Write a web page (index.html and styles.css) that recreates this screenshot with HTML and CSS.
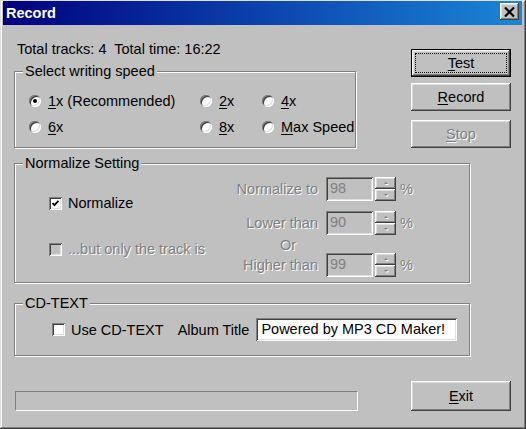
FILE: index.html
```html
<!DOCTYPE html>
<html lang="en">
<head>
    <meta charset="UTF-8"/>
    <title>Record</title>
    <link rel="stylesheet" href="styles.css">
</head>
<body>
<div class="window">
    <div class="titlebar">
        <span class="title">Record</span>
        <button class="close">
            <svg width="11" height="10" viewBox="0 0 11 10"><path d="M1 0.5 L10 9.5 M10 0.5 L1 9.5" stroke="#000" stroke-width="2.2" fill="none"/></svg>
        </button>
    </div>

    <div class="client">
        <div class="top">
            <div class="main-col">
                <div class="summary">Total tracks: 4&nbsp; Total time: 16:22</div>
                <div class="group">
                    <div class="group-title">Select writing speed</div>
                    <div class="speed-grid">
                        <label class="opt"><span class="radio on"></span><span><u>1</u>x (Recommended)</span></label>
                        <label class="opt"><span class="radio"></span><span><u>2</u>x</span></label>
                        <label class="opt"><span class="radio"></span><span><u>4</u>x</span></label>
                        <label class="opt"><span class="radio"></span><span><u>6</u>x</span></label>
                        <label class="opt"><span class="radio"></span><span><u>8</u>x</span></label>
                        <label class="opt"><span class="radio"></span><span><u>M</u>ax Speed</span></label>
                    </div>
                </div>
            </div>
            <div class="actions">
                <button class="btn default"><u>T</u>est</button>
                <button class="btn"><u>R</u>ecord</button>
                <button class="btn stop" disabled><u>S</u>top</button>
            </div>
        </div>

        <div class="group normalize">
            <div class="group-title">Normalize Setting</div>
            <div class="norm-body">
                <div class="checks">
                    <label class="opt"><span class="check on"><svg width="7" height="7" viewBox="0 0 7 7"><path d="M0.5 3 L2.5 5.2 L6.5 0.8" stroke="#000" stroke-width="1.8" fill="none"/></svg></span>Normalize</label>
                    <label class="opt disabled"><span class="check off"></span>...but only the track is</label>
                </div>
                <div class="levels">
                    <div class="level">
                        <span class="level-label disabled">Normalize to</span>
                        <span class="field">98</span>
                        <span class="spin"><span class="spin-btn"><i class="up"></i></span><span class="spin-btn"><i class="down"></i></span></span>
                        <span class="disabled">%</span>
                    </div>
                    <div class="level second">
                        <span class="level-label disabled">Lower than</span>
                        <span class="field">90</span>
                        <span class="spin"><span class="spin-btn"><i class="up"></i></span><span class="spin-btn"><i class="down"></i></span></span>
                        <span class="disabled">%</span>
                    </div>
                    <div class="or disabled">Or</div>
                    <div class="level">
                        <span class="level-label disabled">Higher than</span>
                        <span class="field">99</span>
                        <span class="spin"><span class="spin-btn"><i class="up"></i></span><span class="spin-btn"><i class="down"></i></span></span>
                        <span class="disabled">%</span>
                    </div>
                </div>
            </div>
        </div>

        <div class="group cdtext">
            <div class="group-title">CD-TEXT</div>
            <div class="cd-body">
                <label class="opt"><span class="check"></span>Use CD-TEXT</label>
                <span class="album-label">Album Title</span>
                <span class="textbox">Powered by MP3 CD Maker!</span>
            </div>
        </div>

        <div class="footer">
            <div class="progress"></div>
            <button class="btn exit"><u>E</u>xit</button>
        </div>
    </div>
</div>
</body>
</html>
```

FILE: styles.css
```css
* {
    box-sizing: border-box;
}

body {
    margin: 0;
    background: #c0c0c0;
    font-family: "Liberation Sans", Arial, sans-serif;
    font-size: 14.5px;
    line-height: 16px;
    color: #000;
}

u {
    text-decoration: underline;
    text-underline-offset: 2px;
}

.window {
    width: 526px;
    height: 429px;
    padding: 1px 4px 3px 3px;
    background: #c0c0c0;
    box-shadow: inset -1px -1px 0 #404040, inset 1px 1px 0 #dfdfdf,
                inset -2px -2px 0 #808080, inset 2px 2px 0 #fff;
}

/* caption */
.titlebar {
    height: 24px;
    display: flex;
    align-items: flex-start;
    justify-content: space-between;
    padding: 0 3px 0 3px;
    background: linear-gradient(90deg, #00007e 0%, #0a3ca8 45%, #1a86d6 100%);
}

.title {
    color: #fff;
    font-weight: bold;
    font-size: 14.5px;
    line-height: 24px;
}

.close {
    width: 19px;
    height: 17px;
    margin-top: 2px;
    padding: 0;
    border: 0;
    background: #c0c0c0;
    display: flex;
    align-items: center;
    justify-content: center;
    box-shadow: inset -1px -1px 0 #404040, inset 1px 1px 0 #fff,
                inset -2px -2px 0 #808080, inset 2px 2px 0 #dfdfdf;
}

.client {
    padding: 16px 11px 0 11px;
}

.top {
    display: flex;
    justify-content: space-between;
}

.main-col {
    width: 342px;
}

.summary {
    margin-left: 3px;
}

/* etched group box */
.group {
    margin-top: 14px;
    border: 1px solid #808080;
    box-shadow: 1px 1px 0 #fff, inset 1px 1px 0 #fff;
}

.group-title {
    width: fit-content;
    margin: -9px 0 0 8px;
    padding: 0 2px;
    background: #c0c0c0;
}

.speed-grid {
    display: grid;
    grid-template-columns: 171px 62px auto;
    grid-auto-rows: 16px;
    row-gap: 10px;
    padding: 14px 0 12px 14px;
}

.opt {
    display: flex;
    align-items: center;
    gap: 7px;
    white-space: nowrap;
}

.radio {
    position: relative;
    width: 12px;
    height: 12px;
    flex: none;
    border-radius: 50%;
    background: #fff;
    box-shadow: inset 1px 1px 0 #808080, inset -1px -1px 0 #fff,
                inset 2px 2px 0 #404040, inset -2px -2px 0 #dfdfdf;
}

.radio.on::after {
    content: "";
    position: absolute;
    left: 4px;
    top: 4px;
    width: 4px;
    height: 4px;
    border-radius: 50%;
    background: #000;
}

.check {
    width: 13px;
    height: 13px;
    flex: none;
    display: flex;
    align-items: center;
    justify-content: center;
    background: #fff;
    box-shadow: inset 1px 1px 0 #808080, inset -1px -1px 0 #fff,
                inset 2px 2px 0 #404040, inset -2px -2px 0 #dfdfdf;
}

.check.off {
    background: #c0c0c0;
}

.disabled {
    color: #808080;
    text-shadow: 1px 1px 0 #fff;
}

/* buttons */
.actions {
    width: 100px;
    margin-top: 8px;
    display: flex;
    flex-direction: column;
    gap: 6px;
}

.btn {
    width: 100px;
    height: 28px;
    padding: 0;
    border: 0;
    background: #c0c0c0;
    font: inherit;
    color: #000;
    box-shadow: inset -1px -1px 0 #404040, inset 1px 1px 0 #fff,
                inset -2px -2px 0 #808080, inset 2px 2px 0 #dfdfdf;
}

.btn.default {
    border: 1px solid #000;
    outline: 1px dotted #000;
    outline-offset: -5px;
}

.btn.stop {
    margin-top: 3px;
    color: #808080;
    text-shadow: 1px 1px 0 #fff;
}

/* normalize */
.normalize {
    width: 456px;
    margin-top: 15px;
}

.norm-body {
    display: flex;
}

.checks {
    width: 220px;
    padding: 24px 0 0 34px;
    display: flex;
    flex-direction: column;
    gap: 30px;
}

.checks .opt {
    gap: 6px;
}

.levels {
    padding: 6px 0 5px 0;
}

.level {
    height: 24px;
    display: flex;
    align-items: center;
}

.level.second {
    margin-top: 10px;
}

.level-label {
    width: 83px;
    margin-right: 8px;
    text-align: right;
}

.field {
    width: 47px;
    height: 24px;
    padding: 3px 4px;
    color: #808080;
    background: #c0c0c0;
    box-shadow: inset 1px 1px 0 #808080, inset -1px -1px 0 #fff,
                inset 2px 2px 0 #404040, inset -2px -2px 0 #dfdfdf;
}

.spin {
    width: 21px;
    height: 24px;
    margin: 0 4px 0 2px;
    display: flex;
    flex-direction: column;
    justify-content: space-between;
}

.spin-btn {
    height: 12px;
    display: flex;
    align-items: center;
    justify-content: center;
    box-shadow: inset -1px -1px 0 #404040, inset 1px 1px 0 #fff,
                inset -2px -2px 0 #808080, inset 2px 2px 0 #dfdfdf;
}

.spin-btn i {
    width: 0;
    height: 0;
    border-left: 2px solid transparent;
    border-right: 2px solid transparent;
    filter: drop-shadow(1px 1px 0 #fff);
}

.spin-btn .up {
    border-bottom: 2px solid #808080;
}

.spin-btn .down {
    border-top: 2px solid #808080;
}

.or {
    margin-top: 2px;
    padding-left: 45px;
}

/* cd-text */
.cdtext {
    width: 456px;
    margin-top: 20px;
}

.cd-body {
    display: flex;
    align-items: center;
    padding: 7px 0 14px 37px;
}

.cd-body .opt {
    gap: 6px;
}

.album-label {
    margin: 0 7px 0 14px;
}

.textbox {
    width: 201px;
    height: 23px;
    padding: 3px 5px;
    background: #fff;
    white-space: nowrap;
    box-shadow: inset 1px 1px 0 #808080, inset -1px -1px 0 #fff,
                inset 2px 2px 0 #404040, inset -2px -2px 0 #dfdfdf;
}

/* bottom strip */
.footer {
    margin-top: 25px;
    display: flex;
    align-items: flex-end;
    justify-content: space-between;
}

.progress {
    width: 343px;
    height: 20px;
    margin-left: 1px;
    border: 1px solid;
    border-color: #808080 #fff #fff #808080;
}

.btn.exit {
    height: 30px;
}
```
